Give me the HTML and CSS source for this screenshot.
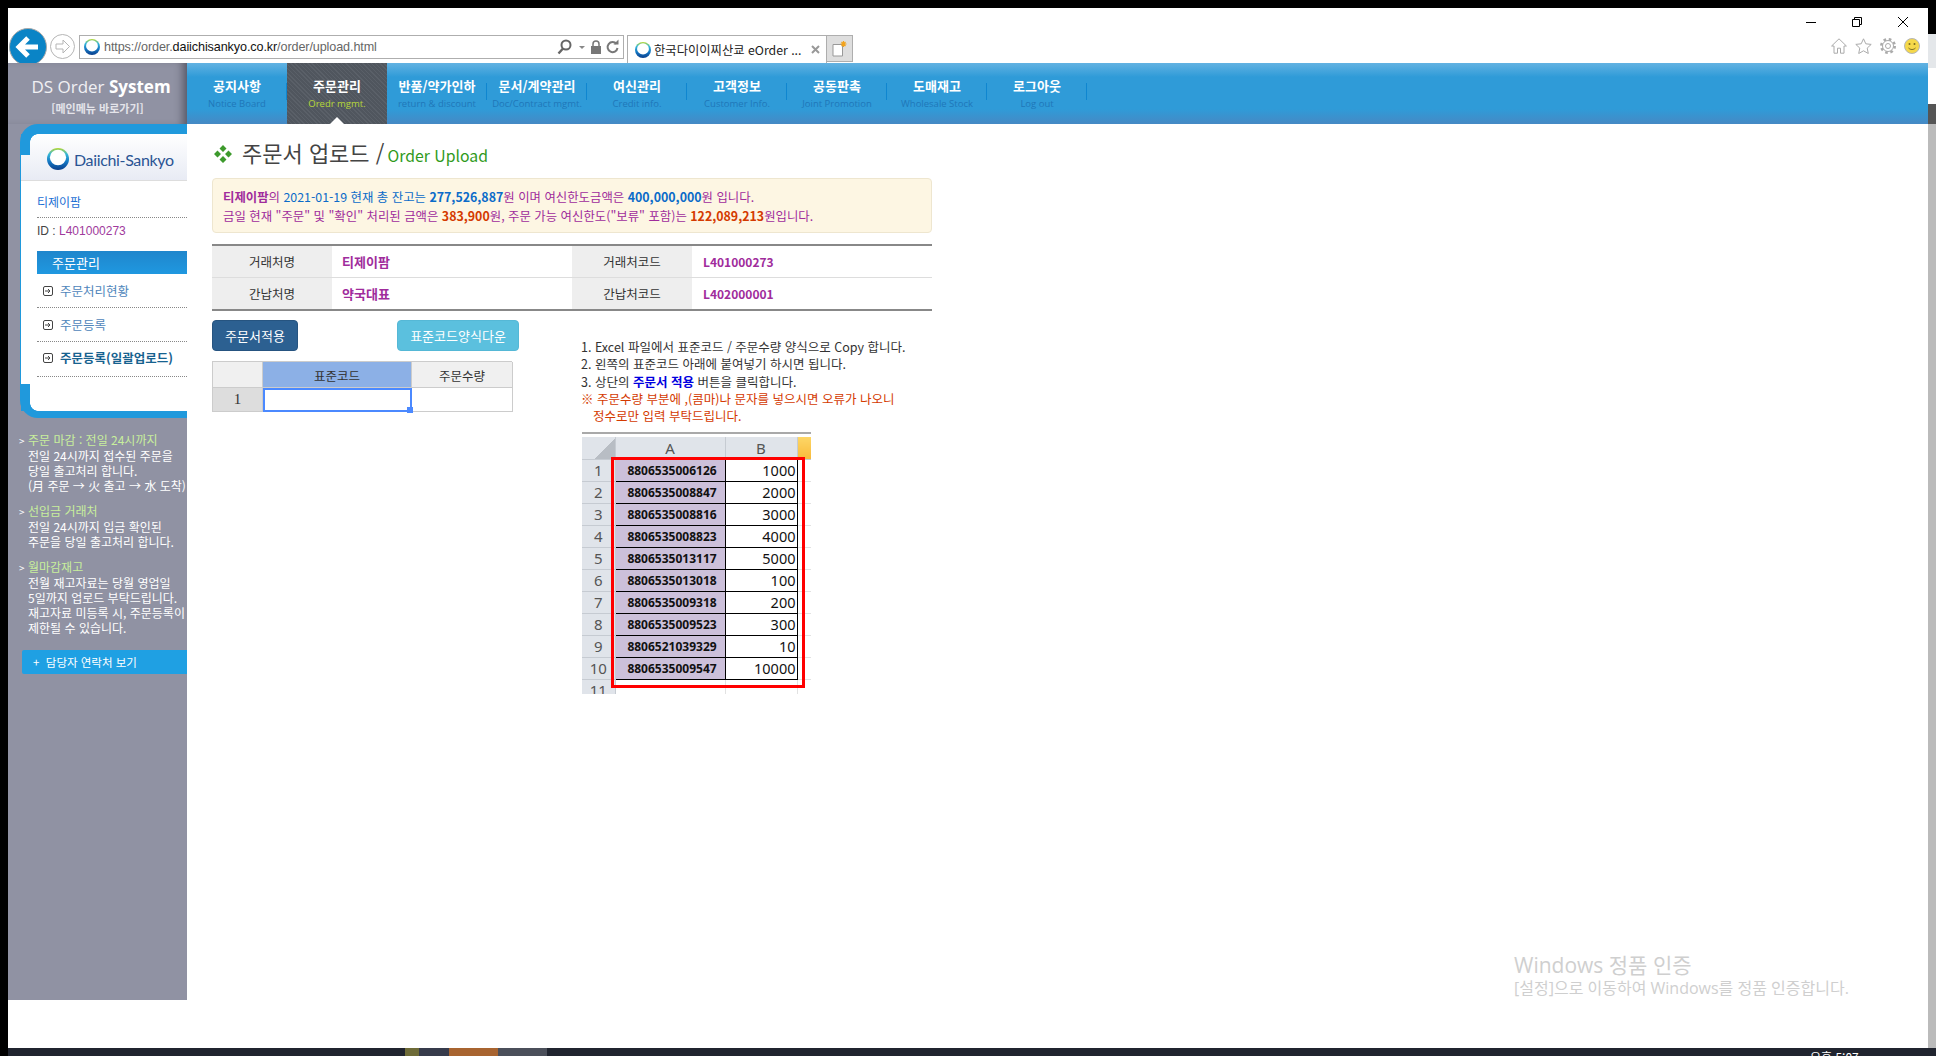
FILE: index.html
```html
<!DOCTYPE html>
<html lang="ko">
<head>
<meta charset="utf-8" />
<meta name="viewport" content="width=device-width, initial-scale=1" />
<title>주문서 업로드 / Order Upload</title>
<link rel="stylesheet" href="styles.css">
</head>
<body>
<svg class="defs" aria-hidden="true">
  <defs>
    <linearGradient id="logoRing" x1="0" y1="0" x2="0" y2="1">
      <stop offset="0" stop-color="#b7d832" />
      <stop offset="0.28" stop-color="#35b6d8" />
      <stop offset="0.62" stop-color="#1578c4" />
      <stop offset="1" stop-color="#0a3f8c" />
    </linearGradient>
    <symbol id="logo" viewBox="0 0 20 20">
      <circle cx="10" cy="10" r="10" fill="url(#logoRing)" />
      <ellipse cx="10" cy="8.6" rx="7.4" ry="7" fill="#fff" />
    </symbol>
    <symbol id="menuIcon" viewBox="0 0 10 10">
      <rect x="0.5" y="0.5" width="9" height="9" rx="1.5" fill="#fff" stroke="#444" />
      <path d="M2 5h5M5 3l2 2-2 2" fill="none" stroke="#444" />
    </symbol>
  </defs>
</svg>

<div class="screen">
  <div class="window">
    <header class="toolbar">
      <div class="back-btn">
        <svg width="38" height="38" viewBox="0 0 38 38"><circle cx="19" cy="19" r="18.5" fill="#0a84c6" stroke="#a9a9a9" /><path d="M29 19H11M19 10l-9 9 9 9" fill="none" stroke="#fff" stroke-width="5" /></svg>
      </div>
      <div class="forward-btn">
        <svg width="25" height="25" viewBox="0 0 25 25"><circle cx="12.5" cy="12.5" r="12" fill="#fff" stroke="#b5b5b5" /><path d="M6 10h7V6l6.500 6.500L13 19v-4H6z" fill="none" stroke="#b5b5b5" /></svg>
      </div>
      <div class="address">
        <svg class="fav" width="16" height="16"><use href="#logo" /></svg>
        <span class="url">https://order.<b>daiichisankyo.co.kr</b>/order/upload.html</span>
        <span class="address-tools">
          <svg width="17" height="16" viewBox="0 0 17 16"><circle cx="9" cy="6" r="4.500" fill="none" stroke="#666" stroke-width="2" /><path d="M6 9.500L1.500 14.500" stroke="#666" stroke-width="2.400" /></svg>
          <svg width="8" height="16" viewBox="0 0 8 16"><path d="M1 7h6l-3 3z" fill="#888" /></svg>
          <svg width="12" height="16" viewBox="0 0 12 16"><path d="M3 7V5a3 3 0 0 1 6 0v2" fill="none" stroke="#777" stroke-width="1.500" /><rect x="1" y="7" width="10" height="8" fill="#777" /></svg>
          <svg width="13" height="16" viewBox="0 0 13 16"><path d="M10.500 5A5 5 0 1 0 11.500 9" fill="none" stroke="#777" stroke-width="2" /><path d="M7.500 5.500h5v-5z" fill="#777" /></svg>
        </span>
      </div>
      <div class="tab">
        <svg class="fav" width="16" height="16"><use href="#logo" /></svg>
        <span class="tab-title">한국다이이찌산쿄 eOrder ...</span>
        <svg class="tab-close" width="9" height="9" viewBox="0 0 9 9"><path d="M1 1l7 7M8 1L1 8" stroke="#999" stroke-width="2" /></svg>
      </div>
      <div class="new-tab">
        <svg width="15" height="16" viewBox="0 0 15 16"><path d="M1 3.500h9.500V15H1z" fill="#fff" stroke="#999" /><path d="M11.500 0v6M8.500 3h6M9.500 1l4 4M13.500 1l-4 4" stroke="#f2a31c" stroke-width="1.200" /></svg>
      </div>
      <div class="toolbar-right">
        <div class="win-controls">
          <svg width="10" height="10" viewBox="0 0 10 10"><path d="M0 5.500h10" stroke="#000" /></svg>
          <svg width="10" height="10" viewBox="0 0 10 10"><path d="M2.500 2.500V.5h7v7h-2M.5 2.500h7v7h-7z" fill="none" stroke="#000" /></svg>
          <svg width="10" height="10" viewBox="0 0 10 10"><path d="M0 0l10 10M10 0L0 10" stroke="#000" /></svg>
        </div>
        <div class="ie-icons">
          <svg width="16" height="16" viewBox="0 0 16 16"><path d="M8 .8L.6 8h2.400v7.200h3.500v-5h3v5H13V8h2.400z" fill="none" stroke="#aaa" /></svg>
          <svg width="17" height="16" viewBox="0 0 17 16"><path d="M8.500.8l2.300 5 5.400.6-4 3.700 1.100 5.400-4.800-2.700-4.800 2.700 1.100-5.400-4-3.700 5.400-.6z" fill="none" stroke="#aaa" /></svg>
          <svg width="16" height="16" viewBox="0 0 16 16"><circle cx="8" cy="8" r="6.500" fill="none" stroke="#aaa" stroke-width="3" stroke-dasharray="2.500 2.600" /><circle cx="8" cy="8" r="5.500" fill="#fff" stroke="#aaa" /><circle cx="8" cy="8" r="2.500" fill="none" stroke="#aaa" /></svg>
          <svg width="16" height="16" viewBox="0 0 16 16"><circle cx="8" cy="8" r="7.500" fill="#f5d84a" stroke="#b5b5b5" /><circle cx="5.500" cy="6" r="1" fill="#7a6a20" /><circle cx="10.500" cy="6" r="1" fill="#7a6a20" /><path d="M4.500 10c2 2 5 2 7 0" fill="none" stroke="#7a6a20" /></svg>
        </div>
      </div>
    </header>

    <div class="page">
      <aside class="sidebar">
        <div class="brand">
          <div class="brand-title">DS Order <b>System</b></div>
          <div class="brand-sub">[메인메뉴 바로가기]</div>
        </div>
        <div class="side-card">
          <div class="card-body">
            <div class="card-logo">
              <svg width="22" height="22"><use href="#logo" /></svg>
              <span class="logo-text">Daiichi-Sankyo</span>
            </div>
            <div class="card-main">
              <div class="user-name">티제이팜</div>
              <div class="user-id">ID : <span>L401000273</span></div>
              <div class="menu-head">주문관리</div>
              <a class="menu-row"><svg width="10" height="10"><use href="#menuIcon" /></svg>주문처리현황</a>
              <a class="menu-row"><svg width="10" height="10"><use href="#menuIcon" /></svg>주문등록</a>
              <a class="menu-row current"><svg width="10" height="10"><use href="#menuIcon" /></svg>주문등록(일괄업로드)</a>
            </div>
          </div>
        </div>
        <div class="notes">
          <div class="note">
            <div class="note-title">주문 마감 : 전일 24시까지</div>
            전일 24시까지 접수된 주문을<br>당일 출고처리 합니다.<br>(月 주문 → 火 출고 → 水 도착)
          </div>
          <div class="note">
            <div class="note-title">선입금 거래처</div>
            전일 24시까지 입금 확인된<br>주문을 당일 출고처리 합니다.
          </div>
          <div class="note">
            <div class="note-title">월마감재고</div>
            전월 재고자료는 당월 영업일<br>5일까지 업로드 부탁드립니다.<br>재고자료 미등록 시, 주문등록이<br>제한될 수 있습니다.
          </div>
        </div>
        <div class="contact-btn">+ &nbsp;담당자 연락처 보기</div>
      </aside>

      <div class="right-part">
        <nav class="topnav">
          <a class="nav-item"><b>공지사항</b><span>Notice Board</span></a>
          <a class="nav-item active"><b>주문관리</b><span>Oredr mgmt.</span></a>
          <a class="nav-item"><b>반품/약가인하</b><span>return &amp; discount</span></a>
          <a class="nav-item"><b>문서/계약관리</b><span>Doc/Contract mgmt.</span></a>
          <a class="nav-item"><b>여신관리</b><span>Credit info.</span></a>
          <a class="nav-item"><b>고객정보</b><span>Customer Info.</span></a>
          <a class="nav-item"><b>공동판촉</b><span>Joint Promotion</span></a>
          <a class="nav-item"><b>도매재고</b><span>Wholesale Stock</span></a>
          <a class="nav-item"><b>로그아웃</b><span>Log out</span></a>
        </nav>

        <main class="content">
          <h1 class="page-title">
            <svg width="18" height="18" viewBox="0 0 18 18"><path d="M9 0l3.500 3.500L9 7 5.500 3.500zM9 11l3.500 3.500L9 18l-3.500-3.500zM3.500 5.500L7 9l-3.500 3.500L0 9zM14.500 5.500L18 9l-3.500 3.500L11 9z" fill="#3d9a2c" /></svg>
            <span>주문서 업로드 / <em>Order Upload</em></span>
          </h1>

          <div class="alert">
            <b>티제이팜</b>의 <span class="blue">2021-01-19 현재 총 잔고는 <b>277,526,887</b></span>원 이며 여신한도금액은 <b class="blue">400,000,000</b>원 입니다.<br>
            금일 현재 "주문" 및 "확인" 처리된 금액은 <b class="red">383,900</b>원, 주문 가능 여신한도("보류" 포함)는 <b class="red">122,089,213</b>원입니다.
          </div>

          <table class="info-table">
            <tr>
              <th>거래처명</th><td>티제이팜</td>
              <th>거래처코드</th><td class="code">L401000273</td>
            </tr>
            <tr>
              <th>간납처명</th><td>약국대표</td>
              <th>간납처코드</th><td class="code">L402000001</td>
            </tr>
          </table>

          <div class="work">
            <div class="work-left">
              <div class="btn-row">
                <button class="btn btn-apply" type="button">주문서적용</button>
                <button class="btn btn-form" type="button">표준코드양식다운</button>
              </div>
              <div class="hot">
                <div class="hot-corner"></div>
                <div class="hot-head selected">표준코드</div>
                <div class="hot-head">주문수량</div>
                <div class="hot-row">1</div>
                <div class="hot-cell focus"></div>
                <div class="hot-cell"></div>
              </div>
            </div>

            <div class="work-right">
              <ol class="guide">
                <li>1. Excel 파일에서 표준코드 / 주문수량 양식으로 Copy 합니다.</li>
                <li>2. 왼쪽의 표준코드 아래에 붙여넣기 하시면 됩니다.</li>
                <li>3. 상단의 <b>주문서 적용</b> 버튼을 클릭합니다.</li>
                <li class="warn">※ 주문수량 부분에 ,(콤마)나 문자를 넣으시면 오류가 나오니</li>
                <li class="warn indent">정수로만 입력 부탁드립니다.</li>
              </ol>

              <div class="excel">
                <table>
                  <tr class="xl-head"><th class="xl-corner"></th><th>A</th><th>B</th><th class="xl-next"></th></tr>
                  <tr><th>1</th><td class="xl-code">8806535006126</td><td class="xl-num">1000</td><td class="xl-gap"></td></tr>
                  <tr><th>2</th><td class="xl-code">8806535008847</td><td class="xl-num">2000</td><td class="xl-gap"></td></tr>
                  <tr><th>3</th><td class="xl-code">8806535008816</td><td class="xl-num">3000</td><td class="xl-gap"></td></tr>
                  <tr><th>4</th><td class="xl-code">8806535008823</td><td class="xl-num">4000</td><td class="xl-gap"></td></tr>
                  <tr><th>5</th><td class="xl-code">8806535013117</td><td class="xl-num">5000</td><td class="xl-gap"></td></tr>
                  <tr><th>6</th><td class="xl-code">8806535013018</td><td class="xl-num">100</td><td class="xl-gap"></td></tr>
                  <tr><th>7</th><td class="xl-code">8806535009318</td><td class="xl-num">200</td><td class="xl-gap"></td></tr>
                  <tr><th>8</th><td class="xl-code">8806535009523</td><td class="xl-num">300</td><td class="xl-gap"></td></tr>
                  <tr><th>9</th><td class="xl-code">8806521039329</td><td class="xl-num">10</td><td class="xl-gap"></td></tr>
                  <tr><th>10</th><td class="xl-code">8806535009547</td><td class="xl-num">10000</td><td class="xl-gap"></td></tr>
                  <tr class="xl-last"><th>11</th><td></td><td></td><td class="xl-gap"></td></tr>
                </table>
                <div class="xl-mark"></div>
              </div>
            </div>
          </div>
        </main>
      </div>

      <div class="watermark">
        <div class="wm-title">Windows 정품 인증</div>
        <div class="wm-text">[설정]으로 이동하여 Windows를 정품 인증합니다.</div>
      </div>
    </div>
  </div>

  <div class="edge">
    <div class="edge-a"></div>
    <div class="edge-b"></div>
    <div class="edge-c"></div>
    <div class="edge-d"></div>
  </div>

  <footer class="taskbar">
    <span class="task task-olive"></span>
    <span class="task task-slate"></span>
    <span class="task task-orange"></span>
    <span class="task task-grey"></span>
    <span class="clock">오후 5:07</span>
  </footer>
</div>
</body>
</html>
```

FILE: styles.css
```css
:root {
  --kr: "Noto Sans CJK KR", "Noto Sans", sans-serif;
  --blue: #2099dc;
  --purple: #a02c9c;
  --red: #d43a00;
}
* {
  box-sizing: border-box;
}
html, body {
  margin: 0;
  height: 100%;
  overflow: hidden;
}
body {
  font-family: var(--kr);
  font-size: 12px;
  color: #333;
  background: #000;
}
.defs {
  position: absolute;
  width: 0;
  height: 0;
}
.screen {
  width: 1936px;
  height: 1056px;
  padding: 8px 0 0 8px;
  display: grid;
  grid-template-columns: 1920px 8px;
  grid-template-rows: 1040px 8px;
  background: #000;
}
.window {
  display: flex;
  flex-direction: column;
  background: #fff;
  overflow: hidden;
}

/* browser chrome */
.toolbar {
  height: 55px;
  flex: none;
  display: flex;
  align-items: flex-end;
  padding-left: 1px;
  background: #fff;
}
.back-btn {
  width: 38px;
  height: 35px;
  overflow: hidden;
  margin-right: 3px;
}
.forward-btn {
  width: 25px;
  height: 25px;
  margin: 0 4px 4px 0;
}
.address {
  width: 545px;
  height: 24px;
  margin-bottom: 4px;
  display: flex;
  align-items: center;
  padding: 0 4px 0 4px;
  border: 1px solid #aeaeae;
}
.url {
  margin-left: 4px;
  font-family: "Liberation Sans", sans-serif;
  font-size: 12.600px;
  letter-spacing: -0.1px;
  color: #666;
  white-space: nowrap;
}
.url b {
  font-weight: 400;
  color: #111;
}
.address-tools {
  margin-left: auto;
  display: flex;
  align-items: center;
  gap: 4px;
}
.tab {
  width: 200px;
  height: 28px;
  margin-left: 3px;
  display: flex;
  align-items: center;
  padding: 0 6px 0 7px;
  border: 1px solid #aeaeae;
  border-bottom: 0;
}
.tab-title {
  margin-left: 3px;
  font-size: 12.300px;
  color: #222;
  white-space: nowrap;
}
.tab-close {
  margin-left: auto;
}
.new-tab {
  width: 26px;
  height: 27px;
  margin-bottom: 1px;
  display: flex;
  align-items: center;
  justify-content: center;
  background: #dedede;
  border: 1px solid #aeaeae;
  border-left: 0;
}
.toolbar-right {
  margin-left: auto;
  height: 55px;
  display: flex;
  flex-direction: column;
  align-items: flex-end;
}
.win-controls {
  display: flex;
  gap: 36px;
  padding: 9px 20px 0 0;
  height: 30px;
}
.ie-icons {
  display: flex;
  gap: 8px;
  padding-right: 8px;
}

/* page */
.page {
  flex: 1;
  display: flex;
  position: relative;
  min-height: 0;
}
.sidebar {
  width: 179px;
  flex: none;
  height: 937px;
  background: #9092a3;
}
.brand {
  height: 61px;
  padding: 13px 0 0 7px;
  text-align: center;
  box-shadow: inset -9px 0 8px -5px rgba(40, 42, 55, 0.55);
}
.brand-title {
  font-family: "Open Sans", "Noto Sans", sans-serif;
  font-size: 17px;
  line-height: 22px;
  color: #f0f0f3;
}
.brand-title b {
  color: #fff;
}
.brand-sub {
  margin: 2px 0 0 -7px;
  font-size: 11px;
  font-weight: 700;
  line-height: 16px;
  color: #e4e4ea;
}
.side-card {
  margin-left: 12px;
  height: 294px;
  padding: 10px 0 7px 1px;
  background: var(--blue);
  border-radius: 18px 0 0 18px;
}
.card-body {
  position: relative;
  height: 100%;
  background: #fff;
}
.card-body::before,
.card-body::after {
  content: "";
  position: absolute;
  left: 0;
  width: 17px;
}
.card-body::before {
  top: 0;
  height: 21px;
  background:
    radial-gradient(circle at 100% 100%, transparent 7.5px, var(--blue) 8px) 9px 0 / 8px 8px no-repeat,
    linear-gradient(var(--blue), var(--blue)) 0 0 / 9px 100% no-repeat;
}
.card-body::after {
  bottom: 0;
  height: 27px;
  background:
    radial-gradient(circle at 100% 0, transparent 7.5px, var(--blue) 8px) 9px 100% / 8px 8px no-repeat,
    linear-gradient(var(--blue), var(--blue)) 0 0 / 9px 100% no-repeat;
}
.card-logo {
  height: 47px;
  display: flex;
  align-items: center;
  padding: 4px 0 0 26px;
  background: linear-gradient(#fff, #e8ebf4);
  border-bottom: 1px solid #ddd;
}
.logo-text {
  margin-left: 5px;
  font-family: "Lato", "Noto Sans", sans-serif;
  font-size: 16px;
  letter-spacing: -0.35px;
  color: #2a5494;
}
.card-main {
  padding-left: 16px;
}
.user-name {
  height: 37px;
  padding-top: 12px;
  font-size: 12px;
  line-height: 18px;
  color: #1c6fd4;
  border-bottom: 1px dotted #888;
}
.user-id {
  height: 33px;
  padding-top: 4px;
  font-size: 12px;
  font-family: "Liberation Sans", var(--kr);
  line-height: 18px;
  color: #444;
}
.user-id span {
  color: #a03a9c;
}
.menu-head {
  height: 23px;
  padding-left: 15px;
  font-size: 13px;
  line-height: 24px;
  color: #fff;
  background: linear-gradient(#1f86cc, #1f98e0);
}
.menu-row {
  height: 34px;
  display: flex;
  align-items: center;
  gap: 7px;
  padding-left: 6px;
  font-size: 12.500px;
  color: #4f86bb;
  border-bottom: 1px dotted #888;
}
.menu-row.current {
  height: 35px;
  padding-bottom: 3px;
  font-weight: 700;
  color: #17628f;
}
.notes {
  padding: 14px 0 0 20px;
  font-size: 12px;
  line-height: 15px;
  color: #fff;
}
.note {
  margin-bottom: 10px;
  white-space: nowrap;
}
.note-title {
  color: #c8ef9c;
}
.note-title::before {
  content: ">";
  display: inline-block;
  width: 9px;
  margin-left: -9px;
  color: #fff;
  font-size: 10px;
}
.contact-btn {
  height: 24px;
  margin: 15px 0 0 14px;
  padding-left: 11px;
  font-size: 11.500px;
  line-height: 24px;
  color: #fff;
  background: #1fa0e3;
  border-radius: 2px 0 0 2px;
}

.right-part {
  flex: 1;
  min-width: 0;
}
.topnav {
  height: 61px;
  display: flex;
  background: linear-gradient(#62b2e2 0, #2f9bd8 14px, #2f9bd8 46px, #4689c4 100%);
}
.nav-item {
  position: relative;
  width: 100px;
  padding-top: 13px;
  display: flex;
  flex-direction: column;
  align-items: center;
  text-align: center;
}
.nav-item:not(.active)::after {
  content: "";
  position: absolute;
  right: 0;
  top: 20px;
  height: 17px;
  width: 1px;
  background: #0f86d0;
}
.nav-item b {
  font-size: 13px;
  line-height: 20px;
  color: #fff;
  white-space: nowrap;
}
.nav-item span {
  margin-top: 1px;
  font-family: "Open Sans", "Noto Sans", sans-serif;
  font-size: 9.500px;
  line-height: 14px;
  color: #1f77b8;
  white-space: nowrap;
}
.nav-item.active {
  background: repeating-linear-gradient(45deg, #5a6068 0 1px, #50565e 1px 3px);
}
.nav-item.active span {
  color: #b7d63a;
}
.nav-item.active::before {
  content: "";
  position: absolute;
  bottom: 0;
  left: 43px;
  border: 7px solid transparent;
  border-top: 0;
  border-bottom-color: #fff;
}

/* main content */
.content {
  width: 770px;
  padding: 17px 0 0 25px;
}
.page-title {
  margin: 0 0 11px;
  height: 26px;
  display: flex;
  align-items: center;
  padding-left: 2px;
  gap: 10px;
  font-size: 22px;
  font-weight: 400;
  line-height: 26px;
  color: #444;
  white-space: nowrap;
}
.page-title em {
  font-style: normal;
  font-size: 15.800px;
  color: #2f9a1c;
  margin-left: -3px;
}
.alert {
  width: 720px;
  height: 55px;
  padding: 9px 10px 0;
  font-size: 12.400px;
  line-height: 18.500px;
  color: var(--purple);
  background: #fdf6e3;
  border: 1px solid #eee6cf;
  border-radius: 4px;
}
.blue {
  color: #0b6bc9;
}
.red {
  color: var(--red);
}
.info-table {
  width: 720px;
  margin-top: 11px;
  border-collapse: collapse;
  table-layout: fixed;
  border-top: 2px solid #888;
  border-bottom: 2px solid #888;
}
.info-table tr + tr {
  border-top: 1px solid #ddd;
}
.info-table th,
.info-table td {
  height: 32.500px;
  padding: 0;
  font-size: 12.500px;
}
.info-table th {
  width: 120px;
  font-weight: 400;
  color: #333;
  background: #eee;
}
.info-table td {
  padding-left: 10px;
  font-size: 13px;
  font-weight: 700;
  color: var(--purple);
}
.info-table td.code {
  padding-left: 11px;
  font-size: 12px;
}
.work {
  display: flex;
}
.work-left {
  width: 300px;
  padding-top: 9px;
}
.btn-row {
  display: flex;
  justify-content: space-between;
  width: 307px;
}
.btn {
  height: 31px;
  padding: 0;
  font-family: var(--kr);
  font-size: 13px;
  color: #fff;
  border: 1px solid transparent;
  border-radius: 4px;
}
.btn-apply {
  width: 86px;
  background: #2c6091;
  border-color: #265480;
}
.btn-form {
  width: 122px;
  background: #5bc0de;
  border-color: #55b8d6;
}
.hot {
  margin-top: 10px;
  width: 300px;
  display: grid;
  grid-template-columns: 50px 149px 101px;
  grid-template-rows: 26px 24px;
  border: 1px solid #ccc;
  border-width: 1px 0 0 1px;
}
.hot > div {
  border: 1px solid #ccc;
  border-width: 0 1px 1px 0;
  display: flex;
  align-items: center;
  justify-content: center;
  font-size: 12.500px;
}
.hot-head {
  padding-top: 2px;
}
.hot-corner,
.hot-head {
  background: #f0f0f0;
}
.hot-head.selected {
  background: #8cb0e6;
}
.hot .hot-row {
  background: #ddd;
  font-family: "Liberation Serif", serif;
  font-size: 15px;
}
.hot-cell {
  background: #fff;
}
.hot .hot-cell.focus {
  position: relative;
  border: 2px solid #4b89ff;
}
.hot-cell.focus::after {
  content: "";
  position: absolute;
  right: -3px;
  bottom: -3px;
  width: 6px;
  height: 6px;
  background: #4b89ff;
}
.work-right {
  margin-left: 69px;
  padding-top: 27px;
}
.guide {
  margin: 0;
  padding: 0;
  list-style: none;
  font-size: 12.500px;
  line-height: 17.300px;
  color: #333;
  white-space: nowrap;
}
.guide b {
  color: #0000e0;
}
.guide .warn {
  color: var(--red);
}
.guide .indent {
  padding-left: 12px;
}

/* excel capture */
.excel {
  position: relative;
  width: 229px;
  height: 262px;
  margin: 8px 0 0 1px;
  padding-top: 3px;
  border-top: 2px solid #a9a9a9;
  overflow: hidden;
  background: #fff;
}
.excel table {
  border-collapse: collapse;
  table-layout: fixed;
  width: 229px;
}
.excel th {
  width: 33px;
  height: 22px;
  padding: 0;
  font-family: "Noto Sans", sans-serif;
  font-size: 15px;
  font-weight: 400;
  color: #555;
  background: #e0e4ea;
  border: 1px solid #c6cbd2;
  border-width: 0 1px 1px 0;
}
.excel .xl-head th:nth-child(2) {
  width: 110px;
}
.excel .xl-head th:nth-child(3) {
  width: 72px;
}
.excel .xl-head th.xl-next {
  width: 14px;
  background: linear-gradient(#fdd666, #f8bb3c);
}
.excel .xl-head .xl-corner {
  background: linear-gradient(135deg, #e0e4ea 62%, #b8bdc4 63%);
}
.excel td {
  padding: 0 1px;
  border: 1px solid #000;
  white-space: nowrap;
}
.excel .xl-code {
  padding-left: 5px;
  font-family: "Noto Sans", sans-serif;
  font-size: 12px;
  font-weight: 700;
  text-align: center;
  color: #111;
  background: #ccc0da;
}
.xl-num {
  font-family: "Noto Sans", sans-serif;
  font-size: 14.500px;
  text-align: right;
  color: #111;
}
.excel td.xl-gap {
  border: 0;
  border-right: 1px solid #e2e2e2;
  border-bottom: 1px solid #e2e2e2;
}
.excel .xl-last td {
  border: 0;
  border-right: 1px solid #e2e2e2;
}
.xl-mark {
  position: absolute;
  left: 29px;
  top: 23px;
  width: 194px;
  height: 231px;
  border: 3px solid #f00;
}

.watermark {
  position: absolute;
  left: 1506px;
  top: 889px;
  white-space: nowrap;
}
.wm-title {
  font-family: "Open Sans", var(--kr);
  font-size: 21px;
  line-height: 26px;
  color: #cfcfcf;
}
.wm-text {
  font-family: "Open Sans", var(--kr);
  font-size: 16px;
  line-height: 20px;
  color: #cfcfcf;
}

/* window edge and taskbar */
.edge {
  display: flex;
  flex-direction: column;
}
.edge-a {
  height: 26px;
  background: #000;
}
.edge-b {
  height: 34px;
  background: #e4e7ea;
}
.edge-c {
  height: 36px;
  background: #fff;
}
.edge-d {
  flex: 1;
  background: linear-gradient(#555 0 20px, #bbb 20px);
}
.taskbar {
  grid-column: 1 / 3;
  display: flex;
  padding-left: 397px;
  background: #20242f;
  overflow: hidden;
  position: relative;
}
.task {
  display: block;
}
.task-olive {
  width: 14px;
  background: #6e6b38;
}
.task-slate {
  width: 30px;
  background: #363b4b;
}
.task-orange {
  width: 49px;
  background: #a86430;
}
.task-grey {
  width: 49px;
  background: #4b4f5a;
}
.clock {
  position: absolute;
  left: 1802px;
  top: 1px;
  font-size: 12px;
  line-height: 16px;
  color: #fff;
  white-space: nowrap;
}
```
